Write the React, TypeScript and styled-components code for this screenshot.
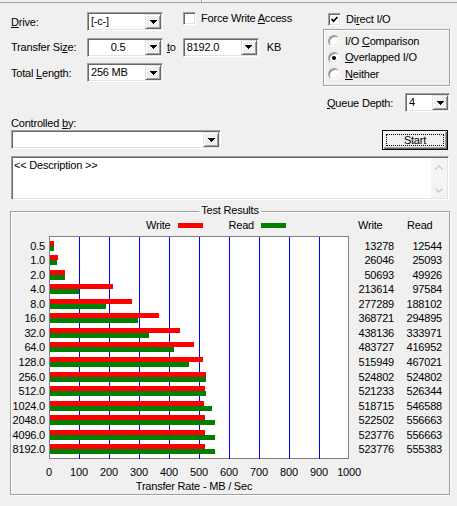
import React from 'react'
import styled, { createGlobalStyle, css } from 'styled-components'

const GlobalStyle = createGlobalStyle`
  html, body {
    margin: 0;
    padding: 0;
    background: #f0f0f0;
  }
  body {
    font-family: 'Liberation Sans', Arial, sans-serif;
    font-size: 11px;
    letter-spacing: -0.2px;
    color: #000;
    overflow: hidden;
  }
`

type Row = { size: string; write: number; read: number }

const results: Row[] = [
  { size: '0.5', write: 13278, read: 12544 },
  { size: '1.0', write: 26046, read: 25093 },
  { size: '2.0', write: 50693, read: 49926 },
  { size: '4.0', write: 213614, read: 97584 },
  { size: '8.0', write: 277289, read: 188102 },
  { size: '16.0', write: 368721, read: 294895 },
  { size: '32.0', write: 438136, read: 333971 },
  { size: '64.0', write: 483727, read: 416952 },
  { size: '128.0', write: 515949, read: 467021 },
  { size: '256.0', write: 524802, read: 524802 },
  { size: '512.0', write: 521233, read: 526344 },
  { size: '1024.0', write: 518715, read: 546588 },
  { size: '2048.0', write: 522502, read: 556663 },
  { size: '4096.0', write: 523776, read: 556663 },
  { size: '8192.0', write: 523776, read: 555383 },
]

const ticks = [0, 100, 200, 300, 400, 500, 600, 700, 800, 900, 1000]

// 100 MB/s = 30px on the plot
const barWidth = (kb: number) => Math.round((kb / 1024) * 0.304)

const ROW_H = 204 / 14

const sunken = css`
  box-sizing: border-box;
  border: 1px solid;
  border-color: #a0a0a0 #fff #fff #a0a0a0;
  box-shadow: inset 1px 1px 0 #696969, inset -1px -1px 0 #e3e3e3;
`

const etched = css`
  box-sizing: border-box;
  border: 1px solid #a0a0a0;
  box-shadow: 1px 1px 0 #fff, inset 1px 1px 0 #fff;
`

const Window = styled.div`
  width: 457px;
  height: 506px;
  display: flex;
  flex-direction: column;
`

const TopEdge = styled.div`
  height: 2px;
  border-bottom: 1px solid #a0a0a0;
  display: flex;
`

const TopDivider = styled.div`
  margin-left: 201px;
  width: 1px;
  background: #a0a0a0;
  box-shadow: 1px 0 0 #fff;
`

const Header = styled.div`
  display: flex;
  margin-top: 9px;
`

const LeftPanel = styled.div`
  box-sizing: border-box;
  width: 323px;
  padding-left: 11px;
  display: flex;
  flex-direction: column;
  gap: 6.5px;
`

const FieldRow = styled.div`
  display: flex;
  align-items: center;
  height: 19px;
`

const FieldLabel = styled.span<{ $w: number }>`
  width: ${p => p.$w}px;
  flex-shrink: 0;
`

const Key = styled.u`
  text-decoration: underline;
  text-underline-offset: 1px;
`

const Inline = styled.span<{ $ml: number }>`
  margin-left: ${p => p.$ml}px;
`

const ComboBox = styled.div<{ $w: number }>`
  ${sunken}
  width: ${p => p.$w}px;
  height: 19px;
  padding: 1px;
  background: #fff;
  display: flex;
  flex-shrink: 0;
`

const ComboText = styled.div<{ $center?: boolean }>`
  flex: 1;
  padding-left: 2px;
  line-height: 15px;
  text-align: ${p => (p.$center ? 'center' : 'left')};
  white-space: nowrap;
  overflow: hidden;
`

const DropButton = styled.div`
  box-sizing: border-box;
  width: 16px;
  background: #f0f0f0;
  border: 1px solid;
  border-color: #e3e3e3 #696969 #696969 #e3e3e3;
  box-shadow: inset 1px 1px 0 #fff, inset -1px -1px 0 #a0a0a0;
  display: flex;
  align-items: center;
  justify-content: center;
`

const CheckRow = styled.label<{ $ml: number; $mt?: number }>`
  display: flex;
  align-items: center;
  gap: 5px;
  margin-left: ${p => p.$ml}px;
  margin-top: ${p => p.$mt ?? 0}px;
  height: 13px;
  align-self: flex-start;
  line-height: 13px;
`

const CheckBox = styled.span`
  ${sunken}
  width: 13px;
  height: 13px;
  background: #fff;
  display: flex;
  align-items: center;
  justify-content: center;
  flex-shrink: 0;
`

const RightPanel = styled.div`
  display: flex;
  flex-direction: column;
  width: 134px;
`

const RadioGroup = styled.div`
  ${etched}
  width: 127px;
  height: 57px;
  margin-top: 3px;
  padding: 3px 0 0 4px;
  display: flex;
  flex-direction: column;
`

const RadioRow = styled.label`
  display: flex;
  align-items: center;
  gap: 5px;
  height: 16.5px;
  line-height: 13px;
`

const RadioCircle = styled.span<{ $checked?: boolean }>`
  box-sizing: border-box;
  width: 12px;
  height: 12px;
  border-radius: 50%;
  background: #fff;
  border: 1px solid;
  border-color: #a0a0a0 #fff #fff #a0a0a0;
  box-shadow: inset 1px 1px 0 #888, inset -1px -1px 0 #e3e3e3;
  display: flex;
  align-items: center;
  justify-content: center;
  flex-shrink: 0;

  &::after {
    content: '';
    width: 4px;
    height: 4px;
    border-radius: 50%;
    background: #000;
    display: ${p => (p.$checked ? 'block' : 'none')};
  }
`

const QueueRow = styled(FieldRow)`
  margin-top: 7px;
  padding-left: 4px;
`

const ControlLabel = styled.div`
  margin: 4.5px 0 0 11px;
  line-height: 13px;
`

const ControlRow = styled.div`
  display: flex;
  align-items: center;
  height: 20px;
  margin-left: 11px;
`

const StartButton = styled.button`
  box-sizing: border-box;
  width: 66px;
  height: 20px;
  margin-left: 161px;
  padding: 3px;
  border: 1px solid #000;
  background: #f0f0f0;
  box-shadow: inset 1px 1px 0 #fff, inset -1px -1px 0 #696969, inset -2px -2px 0 #a0a0a0;
  font: inherit;
  letter-spacing: inherit;
  color: #000;
  display: flex;
`

const FocusRect = styled.span`
  flex: 1;
  border: 1px dotted #000;
  display: flex;
  align-items: center;
  justify-content: center;
  line-height: 10px;
`

const DescBox = styled.div`
  ${sunken}
  width: 438px;
  height: 44px;
  margin: 6px 0 0 11px;
  padding: 1px;
  background: #fff;
  display: flex;
`

const DescText = styled.div`
  flex: 1;
  padding: 1px 0 0 1px;
  line-height: 13px;
`

const ScrollTrack = styled.div`
  width: 16px;
  background: #f4f4f4;
  display: flex;
  flex-direction: column;
  justify-content: space-between;
  align-items: center;
  padding: 7px 0 5px;
`

const GroupBox = styled.div`
  ${etched}
  position: relative;
  width: 440px;
  height: 284px;
  margin: 11px 0 0 10px;
  padding-top: 7px;
  display: flex;
  flex-direction: column;
`

const GroupTitle = styled.span`
  position: absolute;
  top: -7.5px;
  left: 50%;
  transform: translateX(-50%);
  padding: 0 2px;
  background: #f0f0f0;
  line-height: 13px;
  white-space: nowrap;
`

const LegendRow = styled.div`
  display: flex;
  height: 14px;
  align-items: center;
  line-height: 13px;
`

const LegendArea = styled.div`
  width: 300px;
  margin-left: 38px;
  padding-left: 97px;
  box-sizing: border-box;
  display: flex;
  align-items: center;
`

const Swatch = styled.span<{ $color: string; $ml: number; $mr: number }>`
  width: 25px;
  height: 5px;
  margin: 0 ${p => p.$mr}px 0 ${p => p.$ml}px;
  background: ${p => p.$color};
`

const ColHead = styled.span<{ $ml: number }>`
  width: 37px;
  margin-left: ${p => p.$ml}px;
  padding-left: 1px;
`

const ChartBody = styled.div`
  display: flex;
  align-items: flex-start;
  margin-top: 3px;
`

const LabelCol = styled.div<{ $w: number; $ml?: number }>`
  box-sizing: border-box;
  width: ${p => p.$w}px;
  margin-left: ${p => p.$ml ?? 0}px;
  padding: 5px 4px 0 0;
  text-align: right;
`

const NumCol = styled(LabelCol)`
  padding-right: 0;
`

const CellText = styled.div`
  height: ${ROW_H}px;
  line-height: 10px;
  white-space: nowrap;
`

const Plot = styled.div`
  box-sizing: border-box;
  width: 300px;
  height: 223px;
  border: 1px solid #808080;
  background: #fff;
  display: grid;
`

const GridLayer = styled.div`
  grid-area: 1 / 1;
  display: flex;
`

const GridCell = styled.div`
  box-sizing: border-box;
  width: 30px;
  flex-shrink: 0;
  border-right: 1px solid #0000ff;

  &:last-child {
    border-right: none;
  }
`

const BarLayer = styled.div`
  grid-area: 1 / 1;
  padding-top: 4px;
  z-index: 1;
`

const BarRow = styled.div`
  height: ${ROW_H}px;
  display: flex;
  flex-direction: column;
`

const Bar = styled.div<{ $color: string }>`
  height: 5px;
  background: ${p => p.$color};
`

const AxisRow = styled.div`
  display: flex;
  margin: 7.5px 0 0 23px;
  line-height: 13px;
`

const Tick = styled.span`
  width: 30px;
  text-align: center;
`

const AxisTitle = styled.div`
  width: 290px;
  margin: 1px 0 0 38px;
  text-align: center;
  line-height: 13px;
`

const Arrow = () => (
  <svg width="7" height="4" viewBox="0 0 7 4" shapeRendering="crispEdges">
    <path d="M0 0h7v1h-1v1h-1v1h-1v1h-1v-1h-1v-1h-1v-1h-1z" fill="#000" />
  </svg>
)

const Check = () => (
  <svg width="9" height="9" viewBox="0 0 9 9">
    <polyline points="1.5,4 3.5,6.2 7.5,2" fill="none" stroke="#000" strokeWidth="1.7" />
  </svg>
)

const Chevron = ({ up }: { up?: boolean }) => (
  <svg width="8" height="5" viewBox="0 0 8 5">
    <polyline
      points={up ? '0.5,4.5 4,1 7.5,4.5' : '0.5,0.5 4,4 7.5,0.5'}
      fill="none"
      stroke="#c8c8c8"
      strokeWidth="1.3"
    />
  </svg>
)

const Combo = ({ w, value, center }: { w: number; value: string; center?: boolean }) => (
  <ComboBox $w={w}>
    <ComboText $center={center}>{value}</ComboText>
    <DropButton>
      <Arrow />
    </DropButton>
  </ComboBox>
)

export default function App() {
  return (
    <Window>
      <GlobalStyle />
      <TopEdge>
        <TopDivider />
      </TopEdge>

      <Header>
        <LeftPanel>
          <FieldRow>
            <FieldLabel $w={76}>
              <Key>D</Key>rive:
            </FieldLabel>
            <Combo w={76} value="[-c-]" />
            <CheckRow $ml={20}>
              <CheckBox />
              <span>
                Force Write <Key>A</Key>ccess
              </span>
            </CheckRow>
          </FieldRow>
          <FieldRow>
            <FieldLabel $w={76}>
              Transfer Si<Key>z</Key>e:
            </FieldLabel>
            <Combo w={76} value="0.5" center />
            <Inline $ml={4}>
              <Key>t</Key>o
            </Inline>
            <Inline $ml={7}>
              <Combo w={76} value="8192.0" />
            </Inline>
            <Inline $ml={8}>KB</Inline>
          </FieldRow>
          <FieldRow>
            <FieldLabel $w={76}>
              Total <Key>L</Key>ength:
            </FieldLabel>
            <Combo w={76} value="256 MB" />
          </FieldRow>
        </LeftPanel>

        <RightPanel>
          <CheckRow $ml={5} $mt={1}>
            <CheckBox>
              <Check />
            </CheckBox>
            <span>
              Di<Key>r</Key>ect I/O
            </span>
          </CheckRow>
          <RadioGroup>
            <RadioRow>
              <RadioCircle />
              <span>
                I/O <Key>C</Key>omparison
              </span>
            </RadioRow>
            <RadioRow>
              <RadioCircle $checked />
              <span>
                <Key>O</Key>verlapped I/O
              </span>
            </RadioRow>
            <RadioRow>
              <RadioCircle />
              <span>
                <Key>N</Key>either
              </span>
            </RadioRow>
          </RadioGroup>
          <QueueRow>
            <FieldLabel $w={78}>
              <Key>Q</Key>ueue Depth:
            </FieldLabel>
            <Combo w={45} value="4" />
          </QueueRow>
        </RightPanel>
      </Header>

      <ControlLabel>
        Controlled <Key>b</Key>y:
      </ControlLabel>
      <ControlRow>
        <Combo w={210} value="" />
        <StartButton>
          <FocusRect>Start</FocusRect>
        </StartButton>
      </ControlRow>

      <DescBox>
        <DescText>&lt;&lt; Description &gt;&gt;</DescText>
        <ScrollTrack>
          <Chevron up />
          <Chevron />
        </ScrollTrack>
      </DescBox>

      <GroupBox>
        <GroupTitle>Test Results</GroupTitle>
        <LegendRow>
          <LegendArea>
            <span>Write</span>
            <Swatch $color="#ff0000" $ml={8} $mr={25} />
            <span>Read</span>
            <Swatch $color="#008000" $ml={7} $mr={0} />
          </LegendArea>
          <ColHead $ml={8}>Write</ColHead>
          <ColHead $ml={11}>Read</ColHead>
        </LegendRow>

        <ChartBody>
          <LabelCol $w={38}>
            {results.map(r => (
              <CellText key={r.size}>{r.size}</CellText>
            ))}
          </LabelCol>
          <Plot>
            <GridLayer>
              {ticks.slice(1).map(t => (
                <GridCell key={t} />
              ))}
            </GridLayer>
            <BarLayer>
              {results.map(r => (
                <BarRow key={r.size}>
                  <Bar $color="#ff0000" style={{ width: barWidth(r.write) }} />
                  <Bar $color="#008000" style={{ width: barWidth(r.read) }} />
                </BarRow>
              ))}
            </BarLayer>
          </Plot>
          <NumCol $w={37} $ml={8}>
            {results.map(r => (
              <CellText key={r.size}>{r.write}</CellText>
            ))}
          </NumCol>
          <NumCol $w={37} $ml={11}>
            {results.map(r => (
              <CellText key={r.size}>{r.read}</CellText>
            ))}
          </NumCol>
        </ChartBody>

        <AxisRow>
          {ticks.map(t => (
            <Tick key={t}>{t}</Tick>
          ))}
        </AxisRow>
        <AxisTitle>Transfer Rate - MB / Sec</AxisTitle>
      </GroupBox>
    </Window>
  )
}
